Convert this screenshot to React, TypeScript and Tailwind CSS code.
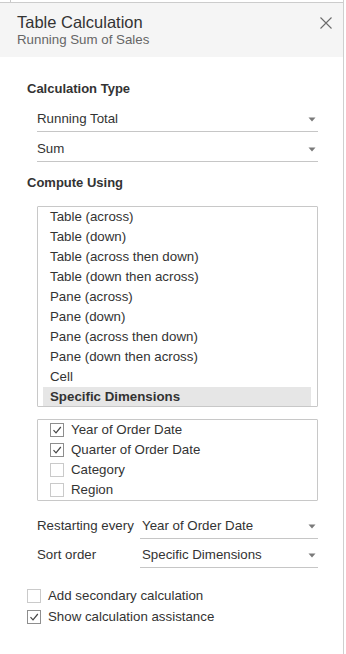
import React from "react";

const font = { fontFamily: '"Liberation Sans", Arial, sans-serif' };

function Arrow() {
  return (
    <svg width="8" height="5" viewBox="0 0 8 5" className="shrink-0">
      <path d="M0.5 0.5 H7.5 L4 4.5 Z" fill="#7a7a7a" />
    </svg>
  );
}

function Dropdown({ text, cls }: { text: string; cls: string }) {
  return (
    <div className={`${cls} shrink-0 flex items-end justify-between border-b border-[#c6c6c6] pb-[4px] pr-[2px]`}>
      <span className="text-[13.3px] leading-[16px] text-[#333]">{text}</span>
      <div className="h-[16px] flex items-center">
        <Arrow />
      </div>
    </div>
  );
}

function Check({ checked }: { checked: boolean }) {
  return (
    <div
      className={`w-[14px] h-[14px] shrink-0 border ${
        checked ? "border-[#8e8e8e]" : "border-[#cacaca]"
      } bg-white flex items-center justify-center`}
    >
      {checked && (
        <svg width="12" height="12" viewBox="0 0 12 12">
          <path d="M2.5 6.2 L5 8.8 L9.8 3" fill="none" stroke="#444" strokeWidth="1.2" />
        </svg>
      )}
    </div>
  );
}

const computeItems = [
  "Table (across)",
  "Table (down)",
  "Table (across then down)",
  "Table (down then across)",
  "Pane (across)",
  "Pane (down)",
  "Pane (across then down)",
  "Pane (down then across)",
  "Cell",
  "Specific Dimensions",
];

const dims: [string, boolean][] = [
  ["Year of Order Date", true],
  ["Quarter of Order Date", true],
  ["Category", false],
  ["Region", false],
];

export default function App() {
  return (
    <div className="w-[346px] h-[654px] bg-white overflow-hidden" style={font}>
      <div className="w-[344px] h-[654px] border-r border-[#cfcfcf] flex flex-col">
        <div className="h-[2px] shrink-0 flex">
          <div className="ml-[10px] w-px h-full bg-[#c8c8c8]" />
        </div>
        <div className="h-[55px] shrink-0 border-t border-[#cccccc] bg-[#f5f5f5] flex justify-between pl-[17px] pr-[11px]">
          <div className="pt-[9px]">
            <div className="text-[16.5px] leading-[20px] text-[#333]">Table Calculation</div>
            <div className="text-[13.3px] leading-[16px] text-[#666]">Running Sum of Sales</div>
          </div>
          <div className="pt-[14px]">
            <svg width="12" height="12" viewBox="0 0 12 12">
              <path d="M0.5 0.5 L11.5 11.5 M11.5 0.5 L0.5 11.5" stroke="#6b6b6b" strokeWidth="1.1" fill="none" />
            </svg>
          </div>
        </div>

        <div className="pl-[27px] pr-[25px] pt-[24px] flex flex-col text-[#333]">
          <div className="text-[13px] leading-[16px] font-bold">Calculation Type</div>
          <div className="mt-[5px] ml-[10px] flex flex-col">
            <Dropdown text="Running Total" cls="h-[30px] w-full" />
            <Dropdown text="Sum" cls="h-[30px] w-full" />
          </div>
          <div className="mt-[13px] text-[13px] leading-[16px] font-bold">Compute Using</div>

          <div className="mt-[15px] ml-[10px] h-[201px] shrink-0 overflow-hidden border border-[#c8c8c8] rounded-[1px]">
            {computeItems.map((t, i) => {
              const sel = i === computeItems.length - 1;
              return (
                <div
                  key={t}
                  className={`h-[20px] ml-[5px] mr-[6px] pl-[7px] text-[13.3px] leading-[20px] ${
                    sel ? "bg-[#e6e6e6] font-bold" : ""
                  }`}
                >
                  {t}
                </div>
              );
            })}
          </div>

          <div className="mt-[12px] ml-[10px] border border-[#c8c8c8] rounded-[1px]">
            {dims.map(([t, c]) => (
              <div key={t} className="h-[20px] flex items-center gap-[7px] pl-[12px]">
                <Check checked={c} />
                <span className="text-[13.3px] leading-[20px]">{t}</span>
              </div>
            ))}
          </div>

          <div className="mt-[8px] ml-[10px] flex items-end">
            <div className="w-[103px] shrink-0 pb-[5px] text-[13.3px] leading-[16px]">Restarting every</div>
            <Dropdown text="Year of Order Date" cls="h-[30px] flex-1 pl-[2px]" />
          </div>
          <div className="ml-[10px] flex items-end">
            <div className="w-[103px] shrink-0 pb-[5px] text-[13.3px] leading-[16px]">Sort order</div>
            <Dropdown text="Specific Dimensions" cls="h-[29px] flex-1 pl-[2px]" />
          </div>

          <div className="mt-[17px] flex flex-col">
            <div className="h-[21px] flex items-center gap-[7px]">
              <Check checked={false} />
              <span className="text-[13.3px] leading-[21px]">Add secondary calculation</span>
            </div>
            <div className="h-[21px] flex items-center gap-[7px]">
              <Check checked={true} />
              <span className="text-[13.3px] leading-[21px]">Show calculation assistance</span>
            </div>
          </div>
        </div>
      </div>
    </div>
  );
}
